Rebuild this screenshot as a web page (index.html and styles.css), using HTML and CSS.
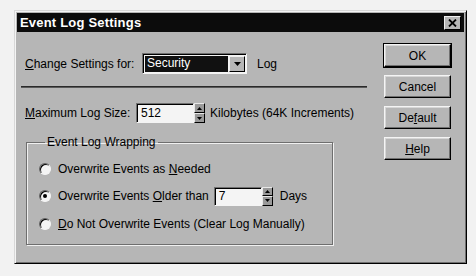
FILE: index.html
```html
<!DOCTYPE html>
<html>
<head>
<meta charset="utf-8">
<link rel="stylesheet" href="styles.css">
</head>
<body>
<div class="dialog">
  <div class="titlebar">
    <span class="title">Event Log Settings</span>
    <span class="close"><svg width="9" height="8" viewBox="0 0 9 8"><path d="M1 0.5 L8 7.5 M8 0.5 L1 7.5" stroke="#000" stroke-width="1.8"/></svg></span>
  </div>
  <div class="content">
    <div class="main">
      <div class="row row1">
        <span class="label lbl-change"><u>C</u>hange Settings for:</span>
        <span class="combo">
          <span class="combo-value">Security</span>
          <span class="combo-btn"><svg width="7" height="4" viewBox="0 0 7 4"><path d="M0 0 H7 L3.5 4 Z" fill="#000"/></svg></span>
        </span>
        <span class="after-combo">Log</span>
      </div>
      <div class="separator"></div>
      <div class="row row2">
        <span class="label lbl-max"><u>M</u>aximum Log Size:</span>
        <span class="edit edit-size">512</span>
        <span class="spin">
          <span class="spin-btn"><svg width="5" height="3" viewBox="0 0 5 3"><path d="M0 3 H5 L2.5 0 Z" fill="#000"/></svg></span>
          <span class="spin-btn"><svg width="5" height="3" viewBox="0 0 5 3"><path d="M0 0 H5 L2.5 3 Z" fill="#000"/></svg></span>
        </span>
        <span class="after-spin">Kilobytes (64K Increments)</span>
      </div>
      <fieldset class="group">
        <legend class="group-title">Event Log Wrapping</legend>
        <div class="radio-row r1">
          <span class="radio"></span>
          <span class="radio-label">Overwrite Events as <u>N</u>eeded</span>
        </div>
        <div class="radio-row r2">
          <span class="radio checked"><span class="dot"></span></span>
          <span class="radio-label">Overwrite Events <u>O</u>lder than</span>
          <span class="edit edit-days">7</span>
          <span class="spin spin-days">
            <span class="spin-btn"><svg width="5" height="3" viewBox="0 0 5 3"><path d="M0 3 H5 L2.5 0 Z" fill="#000"/></svg></span>
            <span class="spin-btn"><svg width="5" height="3" viewBox="0 0 5 3"><path d="M0 0 H5 L2.5 3 Z" fill="#000"/></svg></span>
          </span>
          <span class="after-days">Days</span>
        </div>
        <div class="radio-row r3">
          <span class="radio"></span>
          <span class="radio-label"><u>D</u>o Not Overwrite Events (Clear Log Manually)</span>
        </div>
      </fieldset>
    </div>
    <div class="buttons">
      <span class="btn btn-default">OK</span>
      <span class="btn">Cancel</span>
      <span class="btn">De<u>f</u>ault</span>
      <span class="btn"><u>H</u>elp</span>
    </div>
  </div>
</div>
</body>
</html>
```

FILE: styles.css
```css
html, body {
  margin: 0;
  padding: 0;
}
body {
  background: #f2f2f2;
  padding: 10px 0 0 14px;
  font-family: "Liberation Sans", Arial, sans-serif;
  font-size: 12px;
  color: #000;
}
.dialog {
  width: 453px;
  height: 254px;
  box-sizing: border-box;
  background: #b6b6b6;
  border: 1px solid;
  border-color: #d8d8d8 #000 #000 #d8d8d8;
  box-shadow: inset 1px 1px 0 #f4f4f4, inset -1px -1px 0 #707070;
  padding: 2px;
}
.titlebar {
  height: 19px;
  background: #0c0c0c;
  display: flex;
  align-items: center;
  justify-content: space-between;
  padding: 0 3px 0 3px;
}
.title {
  color: #fff;
  font-weight: bold;
  font-size: 13px;
  letter-spacing: 0.2px;
}
.close {
  width: 17px;
  height: 14px;
  box-sizing: border-box;
  background: #b6b6b6;
  border: 1px solid;
  border-color: #f0f0f0 #000 #000 #f0f0f0;
  display: flex;
  align-items: center;
  justify-content: center;
}
.content {
  display: flex;
}
.main {
  width: 346px;
  padding: 21px 0 0 4px;
}
.row {
  display: flex;
  align-items: center;
  padding-left: 4px;
}
.row1 {
  height: 21px;
}
.lbl-change {
  width: 117px;
}
.combo {
  width: 105px;
  height: 21px;
  box-sizing: border-box;
  border: 1px solid;
  border-color: #707070 #f4f4f4 #f4f4f4 #707070;
  box-shadow: inset 1px 1px 0 #000;
  padding: 2px 1px 1px 2px;
  display: flex;
  background: #f4f4f4;
}
.combo-value {
  flex: 1;
  background: #111;
  color: #fff;
  line-height: 15px;
  padding-left: 2px;
  margin-right: 1px;
}
.combo-btn {
  width: 16px;
  box-sizing: border-box;
  background: #b6b6b6;
  border: 1px solid;
  border-color: #f0f0f0 #000 #000 #f0f0f0;
  display: flex;
  align-items: center;
  justify-content: center;
}
.after-combo {
  margin-left: 10px;
}
.separator {
  margin-top: 12px;
  height: 0;
  border-top: 1px solid #2a2a2a;
  border-bottom: 1px solid #5a5a5a;
}
.row2 {
  margin-top: 15px;
  height: 20px;
}
.lbl-max {
  width: 111px;
}
.edit {
  box-sizing: border-box;
  background: #f4f4f4;
  border: 1px solid;
  border-color: #707070 #f4f4f4 #f4f4f4 #707070;
  box-shadow: inset 1px 1px 0 #000;
  display: flex;
  align-items: center;
  padding-left: 4px;
}
.edit-size {
  width: 58px;
  height: 20px;
}
.spin {
  width: 11px;
  height: 20px;
  display: flex;
  flex-direction: column;
}
.spin-btn {
  flex: 1;
  box-sizing: border-box;
  background: #9a9a9a;
  border: 1px solid;
  border-color: #e8e8e8 #000 #000 #e8e8e8;
  display: flex;
  align-items: center;
  justify-content: center;
}
.after-spin {
  margin-left: 5px;
}
.group {
  margin: 12px 0 0 5px;
  width: 307px;
  height: 110px;
  box-sizing: border-box;
  border: 1px solid #6e6e6e;
  box-shadow: 1px 1px 0 #f0f0f0, inset 1px 1px 0 #f0f0f0;
  padding: 6px 0 0 12px;
}
.group-title {
  padding: 0 2px;
  margin-left: 6px;
}
.radio-row {
  display: flex;
  align-items: center;
  height: 27px;
}
.r2 {
  height: 28px;
}
.radio {
  width: 12px;
  height: 12px;
  box-sizing: border-box;
  border-radius: 50%;
  background: #f4f4f4;
  border: 1px solid;
  border-color: #606060 #f4f4f4 #f4f4f4 #606060;
  box-shadow: inset 1px 1px 0 #000;
  display: flex;
  align-items: center;
  justify-content: center;
}
.dot {
  width: 4px;
  height: 4px;
  border-radius: 50%;
  background: #000;
}
.radio-label {
  margin-left: 7px;
}
.edit-days {
  margin-left: 5px;
  width: 48px;
  height: 19px;
}
.spin-days {
  height: 19px;
}
.after-days {
  margin-left: 7px;
}
.buttons {
  margin: 12px 0 0 17px;
  display: flex;
  flex-direction: column;
  gap: 8px;
}
.btn {
  width: 67px;
  height: 23px;
  box-sizing: border-box;
  border: 1px solid;
  border-color: #f4f4f4 #000 #000 #f4f4f4;
  box-shadow: inset -1px -1px 0 #707070, inset 1px 1px 0 #d6d6d6;
  display: flex;
  align-items: center;
  justify-content: center;
}
.btn-default {
  outline: 1px solid #000;
}
```
